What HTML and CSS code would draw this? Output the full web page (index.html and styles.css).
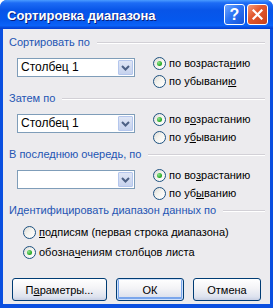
FILE: index.html
```html
<!DOCTYPE html>
<html lang="ru">
<head>
  <meta charset="UTF-8">
  <title>Сортировка диапазона</title>
  <link rel="stylesheet" href="styles.css">
</head>
<body>

  <div class="window">
    <div class="titlebar">
      <span class="title">Сортировка диапазона</span>
      <button class="title-button help-button">?</button>
      <button class="title-button close-button">
        <svg width="11" height="11" viewBox="0 0 11 11"><path d="M1.5 1.5 L9.5 9.5 M9.5 1.5 L1.5 9.5" stroke="#fff" stroke-width="2.2" stroke-linecap="square"/></svg>
      </button>
    </div>

    <div class="client">
      <div class="group-title">Сортировать по</div>
      <div class="sort-row">
        <div class="combo">
          <span class="combo-text">Столбец 1</span>
          <span class="combo-arrow"><svg width="9" height="6" viewBox="0 0 9 6"><path d="M1 1 L4.5 4.5 L8 1" fill="none" stroke="#4d6185" stroke-width="2"/></svg></span>
        </div>
        <div class="radio-list">
          <label class="radio checked"><span class="dot"></span>по возраста<u>н</u>ию</label>
          <label class="radio"><span class="dot"></span>по убывани<u>ю</u></label>
        </div>
      </div>

      <div class="group-title">Затем по</div>
      <div class="sort-row">
        <div class="combo">
          <span class="combo-text">Столбец 1</span>
          <span class="combo-arrow"><svg width="9" height="6" viewBox="0 0 9 6"><path d="M1 1 L4.5 4.5 L8 1" fill="none" stroke="#4d6185" stroke-width="2"/></svg></span>
        </div>
        <div class="radio-list">
          <label class="radio checked"><span class="dot"></span>по в<u>о</u>зрастанию</label>
          <label class="radio"><span class="dot"></span>по у<u>б</u>ыванию</label>
        </div>
      </div>

      <div class="group-title">В последнюю очередь, по</div>
      <div class="sort-row">
        <div class="combo">
          <span class="combo-text"></span>
          <span class="combo-arrow"><svg width="9" height="6" viewBox="0 0 9 6"><path d="M1 1 L4.5 4.5 L8 1" fill="none" stroke="#4d6185" stroke-width="2"/></svg></span>
        </div>
        <div class="radio-list">
          <label class="radio checked"><span class="dot"></span>по во<u>з</u>растанию</label>
          <label class="radio"><span class="dot"></span>по уб<u>ы</u>ванию</label>
        </div>
      </div>

      <div class="group-title">Идентифицировать диапазон данных по</div>
      <div class="radio-list wide">
        <label class="radio"><span class="dot"></span><u>п</u>одписям (первая строка диапазона)</label>
        <label class="radio checked"><span class="dot"></span>обозна<u>ч</u>ениям столбцов листа</label>
      </div>

      <div class="button-row">
        <button class="push-button params">П<u>а</u>раметры...</button>
        <button class="push-button default">ОК</button>
        <button class="push-button">Отмена</button>
      </div>
    </div>
  </div>

</body>
</html>
```

FILE: styles.css
```css
/* page */
body {
  margin: 0;
  background: #fff;
  font-family: Tahoma, "Liberation Sans", "DejaVu Sans", sans-serif;
  font-size: 11px;
}

/* window frame */
.window {
  width: 273px;
  height: 308px;
  box-sizing: border-box;
  display: flex;
  flex-direction: column;
  border-radius: 7px 7px 0 0;
  background: #0a4fe0;
  overflow: hidden;
}

/* title bar */
.titlebar {
  height: 29px;
  flex: none;
  display: flex;
  align-items: center;
  padding: 0 5px 0 7px;
  background: linear-gradient(180deg, #4a9cff 0%, #1d6cf5 10%, #0855e8 35%, #0558ee 70%, #0a62f8 88%, #0648d8 96%, #003dd7 100%);
}

.title {
  flex: 1;
  color: #fff;
  font-family: "Liberation Sans", "DejaVu Sans", sans-serif;
  font-weight: bold;
  font-size: 13px;
  text-shadow: 1px 1px 0 #0a1e7a;
  padding-top: 1px;
}

.title-button {
  width: 21px;
  height: 21px;
  padding: 0;
  margin-left: 2px;
  border: 1px solid #fff;
  border-radius: 3px;
  display: flex;
  align-items: center;
  justify-content: center;
  color: #fff;
}

.help-button {
  background: linear-gradient(135deg, #6fa6ff 0%, #2c74f4 45%, #1553d8 100%);
  font-family: "Liberation Sans", sans-serif;
  font-weight: bold;
  font-size: 16px;
}

.close-button {
  background: linear-gradient(135deg, #f59c7a 0%, #e2592f 40%, #c8401a 100%);
}

/* client area */
.client {
  flex: 1;
  display: flex;
  flex-direction: column;
  margin: 0 3px 4px;
  padding: 7px 5px 3px 6px;
  background: #ecebee;
}

.group-title {
  display: flex;
  align-items: center;
  gap: 7px;
  height: 13px;
  line-height: 13px;
  color: #1f55b3;
  margin-top: 2px;
}

.group-title:first-child {
  margin-top: 0;
}

.group-title::after {
  content: "";
  flex: 1;
  height: 1px;
  background: #d2d0d6;
  border-bottom: 1px solid #fff;
}

.sort-row {
  display: flex;
  align-items: flex-start;
  gap: 18px;
  margin-top: 5px;
  padding-left: 8px;
}

/* combo box */
.combo {
  width: 118px;
  height: 19px;
  margin-top: 4px;
  box-sizing: border-box;
  border: 1px solid #7f9db9;
  background: #fff;
  display: flex;
  align-items: stretch;
}

.combo-text {
  flex: 1;
  padding-left: 3px;
  line-height: 17px;
  color: #000;
  font-size: 12px;
}

.combo-arrow {
  width: 15px;
  margin: 1px;
  box-sizing: border-box;
  border: 1px solid #b4c6ed;
  border-radius: 1px;
  background: linear-gradient(180deg, #dfe6f5 0%, #c6d2ee 100%);
  display: flex;
  align-items: center;
  justify-content: center;
}

/* radio buttons */
.radio-list {
  display: flex;
  flex-direction: column;
}

.radio {
  display: flex;
  align-items: center;
  height: 18px;
  color: #000;
  white-space: nowrap;
}

.radio .dot {
  width: 13px;
  height: 13px;
  box-sizing: border-box;
  border: 1px solid #1c5180;
  border-radius: 50%;
  background: linear-gradient(135deg, #dcdad5 0%, #f4f3ee 45%, #fff 100%);
  margin-right: 3px;
  display: flex;
  align-items: center;
  justify-content: center;
}

.radio.checked .dot::after {
  content: "";
  width: 5px;
  height: 5px;
  border-radius: 50%;
  background: radial-gradient(circle at 35% 35%, #8ee58e 0%, #2dad2d 60%, #1b8a1b 100%);
}

.radio-list.wide {
  margin-top: 5px;
  padding-left: 14px;
}

.radio-list.wide .radio {
  height: 20px;
}

/* buttons */
.button-row {
  margin-top: auto;
  display: flex;
  gap: 9px;
  padding-left: 3px;
}

.push-button {
  width: 68px;
  height: 23px;
  padding: 0;
  border: 1px solid #003c74;
  border-radius: 3px;
  background: linear-gradient(180deg, #ffffff 0%, #f3f3f6 45%, #dde2ee 85%, #c7cfe3 100%);
  font-family: Tahoma, "Liberation Sans", sans-serif;
  font-size: 11px;
  color: #000;
}

.push-button.params {
  width: 95px;
}

.push-button.default {
  box-shadow: inset 0 0 0 1px #cee0fb, inset 0 -1px 0 2px #7aa6ec;
}
```
